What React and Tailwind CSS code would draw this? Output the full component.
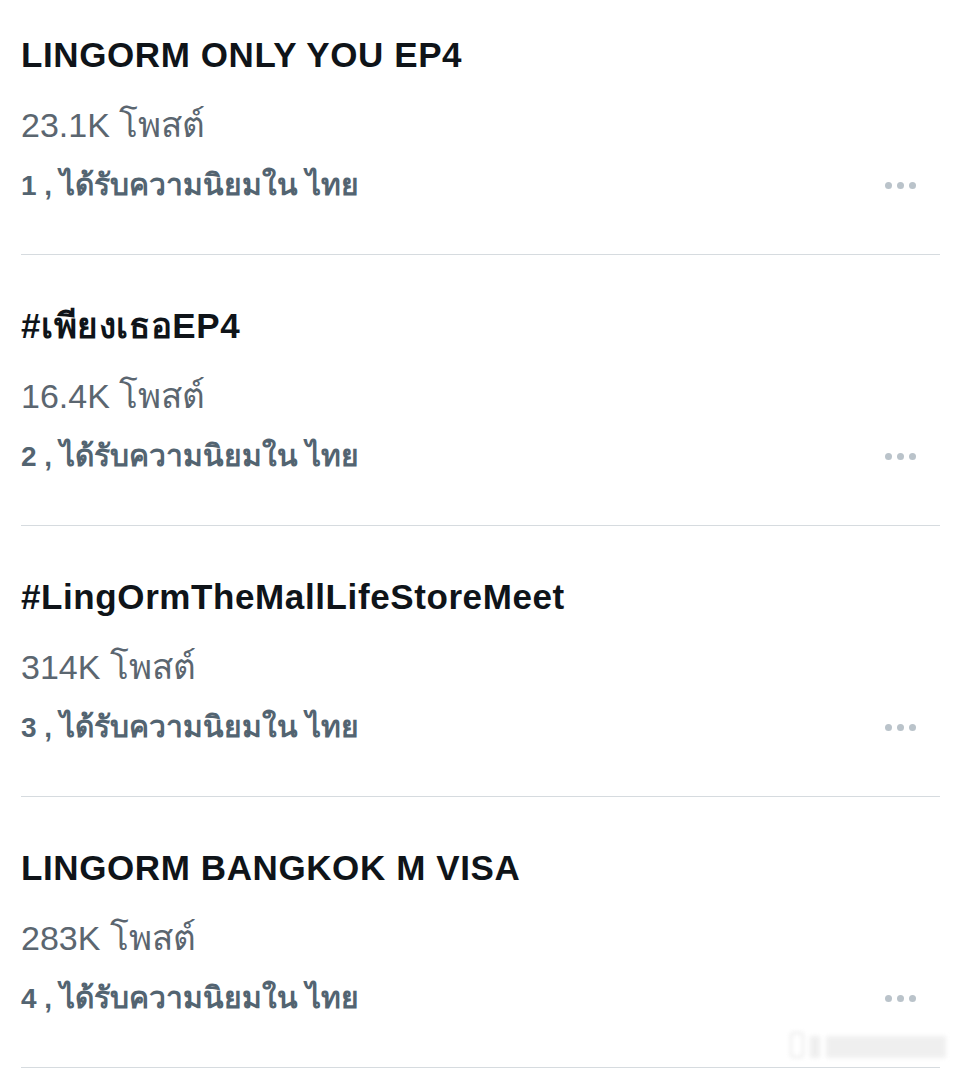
import { useState } from 'react';

const trends = [
  { rank: 1, title: 'LINGORM ONLY YOU EP4', posts: '23.1K' },
  { rank: 2, title: '#เพียงเธอEP4', posts: '16.4K' },
  { rank: 3, title: '#LingOrmTheMallLifeStoreMeet', posts: '314K' },
  { rank: 4, title: 'LINGORM BANGKOK M VISA', posts: '283K' },
];

function MoreDots() {
  return (
    <div className="flex items-center gap-[5px] pr-[24px]">
      <span className="w-[7px] h-[7px] rounded-full bg-[#bac3ca]" />
      <span className="w-[7px] h-[7px] rounded-full bg-[#bac3ca]" />
      <span className="w-[7px] h-[7px] rounded-full bg-[#bac3ca]" />
    </div>
  );
}

export default function App() {
  const [items] = useState(trends);

  return (
    <div className="relative w-[960px] h-[1068px] overflow-hidden bg-white font-['Liberation_Sans',Arial,sans-serif]">
      <div className="ml-[21px] mr-[20px]">
        {items.map((t, i) => (
          <div
            key={t.rank}
            className={`border-b border-[#d6dbdf] pb-[51px] ${i === 0 ? 'pt-[35px]' : 'pt-[51px]'}`}
          >
            <h2 className="h-[40px] text-[35px] leading-[40px] font-bold tracking-[0.6px] text-[#0f1419]">{t.title}</h2>
            <p className="mt-[28px] h-[44px] text-[34px] leading-[44px] text-[#5b6670]">
              {t.posts} <span className="text-[35px]">โพสต์</span>
            </p>
            <div className="mt-[20px] h-[36px] flex items-center justify-between">
              <p className="h-[36px] text-[28px] leading-[36px] font-bold text-[#536471]">
                {t.rank} , <span className="text-[30px]">ได้รับความนิยมใน ไทย</span>
              </p>
              <MoreDots />
            </div>
          </div>
        ))}
      </div>

      {/* faint watermark bottom right */}
      <div className="absolute right-[14px] bottom-[10px] flex items-end gap-[6px] blur-[2px] opacity-60">
        <span className="w-[14px] h-[26px] rounded-[4px] border-2 border-[#dcdcdc]" />
        <span className="w-[10px] h-[22px] bg-[#e4e4e4]" />
        <span className="w-[120px] h-[22px] bg-[#e6e6e6]" />
      </div>
    </div>
  );
}
